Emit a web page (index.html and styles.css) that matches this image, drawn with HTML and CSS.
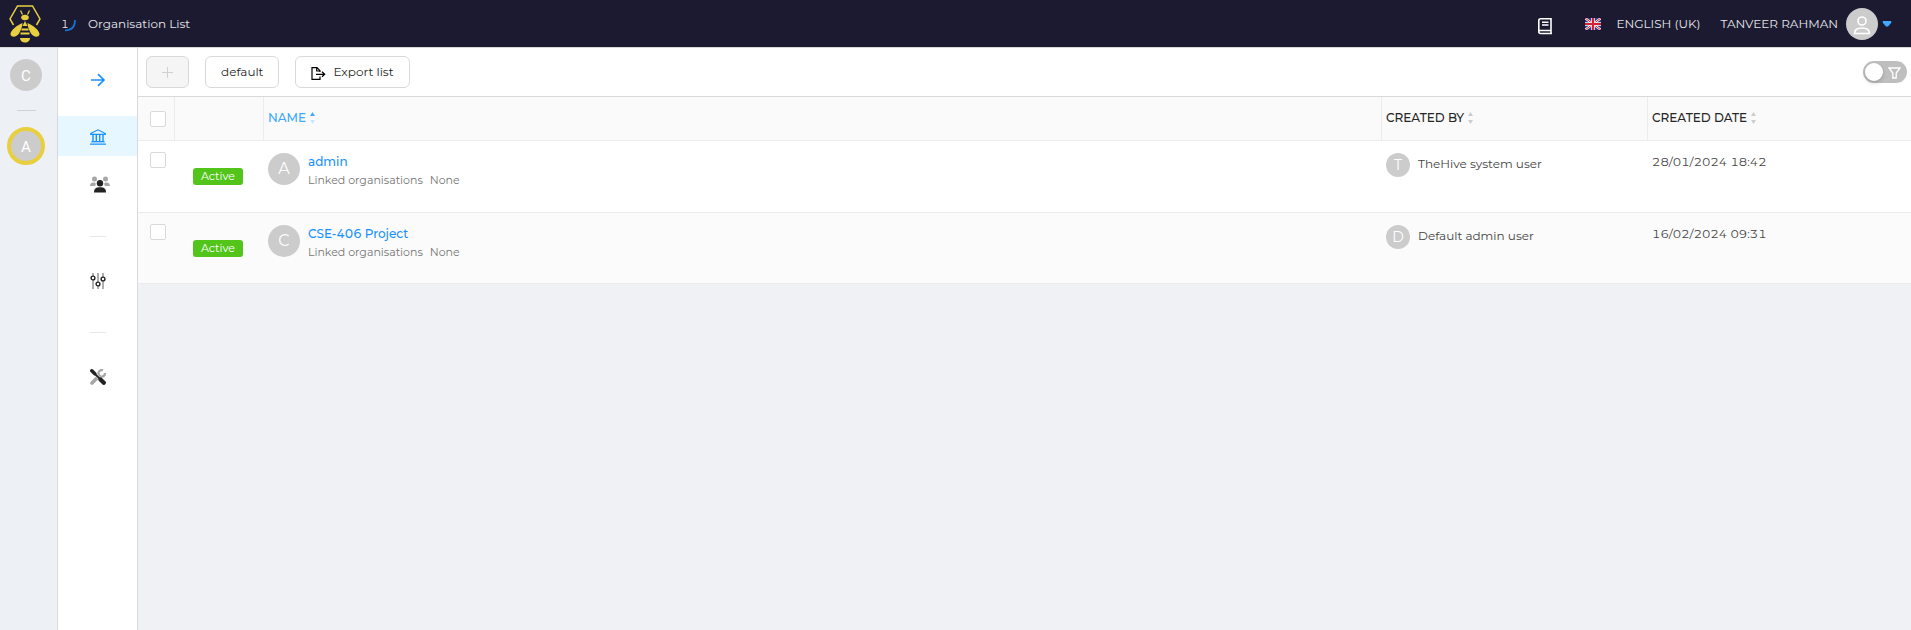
FILE: index.html
```html
<!DOCTYPE html>
<html lang="en">
<head>
<meta charset="utf-8">
<title>Organisation List</title>
<link rel="stylesheet" href="styles.css">
</head>
<body>
<div class="app">
  <header class="topbar">
    <a class="logo" href="#" aria-label="Home">
      <svg width="32" height="38" viewBox="0 0 32 38">
        <path d="M4.500 20 1 14 8.500 1h15L31 14l-3.500 6" fill="none" stroke="#e8cf40" stroke-width="1.500"/>
        <path d="m11.500 5.500 2 4m7-4-2 4" stroke="#e8cf40" stroke-width="1.300" fill="none"/>
        <ellipse cx="16" cy="12.500" rx="3.800" ry="2.700" fill="#e8cf40"/>
        <path d="m16 16 2.500 5h-5z" fill="#e8cf40"/>
        <path d="M13.500 18C8 20 1 26 1.500 29.500c1 3.500 6.500 2.500 8.500-1C11.500 26 13.500 22 13.500 18zM18.500 18c5.500 2 12.500 8 12 11.500-1 3.500-6.500 2.500-8.500-1C20.500 26 18.500 22 18.500 18z" fill="#e8cf40"/>
        <path d="M12.500 24.500h7M11.500 28.500h9" stroke="#e8cf40" stroke-width="1.800"/>
        <path d="M11 33h10c0 2.500-2 4.500-5 4.500s-5-2-5-4.500z" fill="#e8cf40"/>
      </svg>
    </a>
    <div class="loading">
      <span>1</span>
      <svg width="11" height="13" viewBox="0 0 11 13"><path d="M10 1c0 6-3 10.500-10 10.500" fill="none" stroke="#1478d8" stroke-width="1.600"/></svg>
    </div>
    <h1 class="page-title">Organisation List</h1>
    <div class="topbar-right">
      <button class="plain docs" aria-label="Documentation">
        <svg width="16" height="18" viewBox="0 0 16 18" fill="none" stroke="#fff" stroke-width="1.600">
          <path d="M14 13.500V1.800H3.500Q1.800 1.800 1.800 3.500V14.500Q1.800 16.500 3.500 16.500H15M2 13.500h12.500M14 13.500v3M5 5.200h6.500M5 8h6.500"/>
        </svg>
      </button>
      <button class="plain language">
        <svg width="16" height="12" viewBox="0 0 16 12">
          <path fill="#2b3a86" d="M0 0h16v12H0z"/>
          <path d="m0 0 16 12M16 0 0 12" stroke="#fff" stroke-width="2.200"/>
          <path d="m0 0 16 12M16 0 0 12" stroke="#d81e34" stroke-width="1"/>
          <path d="M8 0v12M0 6h16" stroke="#fff" stroke-width="3.600"/>
          <path d="M8 0v12M0 6h16" stroke="#d81e34" stroke-width="2.200"/>
        </svg>
        <span>ENGLISH (UK)</span>
      </button>
      <button class="plain account">
        <span class="account-name">TANVEER RAHMAN</span>
        <span class="avatar">
          <svg width="18" height="20" viewBox="0 0 18 20" fill="none" stroke="#fff" stroke-width="1.600"><circle cx="9" cy="6" r="4"/><path d="M1.500 18.500c0-4 3-5.500 7.500-5.500s7.500 1.500 7.500 5.500z"/></svg>
        </span>
        <svg class="caret" width="10" height="6" viewBox="0 0 10 6"><path d="M1 0h8q1 1 0 2L6 5.500H4L1 2Q0 1 1 0z" fill="#40a9ff"/></svg>
      </button>
    </div>
  </header>

  <aside class="orgs">
    <button class="plain avatar">C</button>
    <hr class="org-divider">
    <button class="plain avatar current">A</button>
  </aside>

  <nav class="sidebar">
    <a class="nav-item toggle" href="#" aria-label="Expand">
      <svg width="16" height="14" viewBox="0 0 16 14" fill="none" stroke="#1890ff" stroke-width="1.600"><path d="M1 7h13M8 1.200 14 7l-6 5.800"/></svg>
    </a>
    <a class="nav-item active" href="#" aria-label="Organisations">
      <svg width="16" height="16" viewBox="0 0 16 16" fill="none" stroke="#1890ff">
        <path d="M.7 4.500 8 .8l7.300 3.700v.8H.7z" stroke-width="1.200"/><path d="M3 6v6M6.300 6v6M9.700 6v6M13 6v6" stroke-width="1.400"/><path d="M1.500 12.700h13M0 15.200h16" stroke-width="1.300"/><path d="M1 14h14" stroke="#8dc8ff"/>
      </svg>
    </a>
    <a class="nav-item" href="#" aria-label="Users">
      <svg width="20" height="17" viewBox="0 0 20 17">
        <g fill="#a6a6a6"><circle cx="4.500" cy="3" r="2.500"/><circle cx="15.500" cy="3" r="2.500"/><path d="M0 10c0-3 2-4 5-3.500L6 8l-1 2zM20 10c0-3-2-4-5-3.500L14 8l1 2z"/></g>
        <g fill="#222"><circle cx="10" cy="7.200" r="3.200"/><path d="M4 16.500c0-4 2-5.300 6-5.300s6 1.300 6 5.300z"/></g>
      </svg>
    </a>
    <hr class="nav-divider">
    <a class="nav-item" href="#" aria-label="Settings">
      <svg width="16" height="16" viewBox="0 0 16 16"><path d="M3 0v16M8 0v16M13 0v16" stroke="#a6a6a6" stroke-width="1.800"/><g fill="#fff" stroke="#222" stroke-width="1.400"><circle cx="3" cy="5" r="1.900"/><circle cx="8" cy="11" r="1.900"/><circle cx="13" cy="6" r="1.900"/></g></svg>
    </a>
    <hr class="nav-divider">
    <a class="nav-item" href="#" aria-label="Tools">
      <svg width="16" height="16" viewBox="0 0 16 16">
        <path d="M2 14 9 7" stroke="#a6a6a6" stroke-width="3.600" stroke-linecap="round"/><path d="M13 1.300A3.300 3.300 0 1 0 15 4" fill="none" stroke="#a6a6a6" stroke-width="2.200"/>
        <path d="m1 1 12 12" stroke="#fff" stroke-width="2.600"/>
        <path d="m1 1 9 9" stroke="#222" stroke-width="1.800"/><path d="m1.800 1.800 3 3" stroke="#222" stroke-width="3.400" stroke-linecap="round"/><path d="m10.500 10.500 3.300 3.300" stroke="#222" stroke-width="4.200" stroke-linecap="round"/>
      </svg>
    </a>
  </nav>

  <main class="content">
    <div class="toolbar">
      <button class="btn add" disabled aria-label="Add organisation">
        <svg width="11" height="11" viewBox="0 0 11 11"><path d="M5.500 0v11M0 5.500h11" stroke="#d0d0d0"/></svg>
      </button>
      <button class="btn">default</button>
      <button class="btn export">
        <svg width="15" height="13" viewBox="0 0 15 13" fill="none" stroke="#000" stroke-width="1.200"><path d="M9 9.500v2.800H1V.7h5L9 3.700V5M5.700 1v3H9M5 7.300h8.500M11 4.800l2.700 2.500L11 9.800"/></svg>
        <span>Export list</span>
      </button>
      <label class="switch">
        <input type="checkbox" aria-label="Show filters">
        <svg width="13" height="12" viewBox="0 0 13 12" fill="none" stroke="#fff" stroke-width="1.300"><path d="M1 1h11L8.200 6v5H4.800V6z"/></svg>
      </label>
    </div>
    <table class="list">
      <colgroup><col class="col-check"><col class="col-status"><col><col class="col-by"><col class="col-date"></colgroup>
      <thead>
        <tr>
          <th><input class="check" type="checkbox" aria-label="Select all"></th>
          <th></th>
          <th class="sorted"><span class="sort">NAME <svg width="5" height="12" viewBox="0 0 5 12"><path d="M0 4h5L2.500 0z" fill="#40a9ff"/><path d="M0 8h5l-2.500 4z" fill="#c8e5ff"/></svg></span></th>
          <th><span class="sort">CREATED BY <svg width="5" height="12" viewBox="0 0 5 12"><path d="M0 4h5L2.500 0zM0 8h5l-2.500 4z" fill="#ccc"/></svg></span></th>
          <th><span class="sort">CREATED DATE <svg width="5" height="12" viewBox="0 0 5 12"><path d="M0 4h5L2.500 0zM0 8h5l-2.500 4z" fill="#ccc"/></svg></span></th>
        </tr>
      </thead>
      <tbody>
        <tr>
          <td><input class="check" type="checkbox" aria-label="Select admin"></td>
          <td class="status"><span class="tag">Active</span></td>
          <td><div class="org"><span class="avatar">A</span><div><a href="#">admin</a><p><span>Linked organisations</span><span>None</span></p></div></div></td>
          <td><div class="user"><span class="avatar small">T</span><span>TheHive system user</span></div></td>
          <td class="date">28/01/2024 18:42</td>
        </tr>
        <tr>
          <td><input class="check" type="checkbox" aria-label="Select CSE-406 Project"></td>
          <td class="status"><span class="tag">Active</span></td>
          <td><div class="org"><span class="avatar">C</span><div><a href="#">CSE-406 Project</a><p><span>Linked organisations</span><span>None</span></p></div></div></td>
          <td><div class="user"><span class="avatar small">D</span><span>Default admin user</span></div></td>
          <td class="date">16/02/2024 09:31</td>
        </tr>
      </tbody>
    </table>
  </main>
</div>
</body>
</html>
```
FILE: styles.css
```css
* { box-sizing: border-box; }
body { margin: 0; font: 12px/20px Montserrat, Inter, "Open Sans", sans-serif; font-feature-settings: "tnum"; color: #444; background: #f0f1f5; }
a { color: #1890ff; text-decoration: none; }
svg { display: block; flex: none; }
.app { display: grid; grid-template: 48px 1fr / 58px 80px 1fr; min-height: 100vh; }
.plain { padding: 0; border: 0; background: none; color: inherit; font: inherit; display: flex; align-items: center; cursor: pointer; }

.topbar { grid-column: 1 / -1; display: flex; align-items: center; padding: 0 19px 0 9px; background: #1b1a31; border-bottom: 1px solid #d9d9d9; color: #e6e6ea; }
.loading { display: flex; align-items: center; width: 27px; margin-left: 20px; font-size: 11px; }
.loading svg { margin-top: 4px; margin-left: -4px; }
.page-title { margin: 0; font-size: 12px; font-weight: 400; }
.topbar-right { display: flex; align-items: center; margin-left: auto; }
.docs { margin-right: 32px; padding-top: 4px; }
.language { gap: 15px; margin-right: 20px; }
.account-name { margin-right: 8px; }
.caret { margin-left: 4px; }

.avatar { display: flex; align-items: center; justify-content: center; flex: none; width: 32px; height: 32px; border-radius: 50%; background: #ccc; color: #fff; font-size: 16px; }
.avatar.small { width: 24px; height: 24px; font-size: 14px; }
.avatar svg { margin-top: 3px; }

.orgs { display: flex; flex-direction: column; align-items: center; padding: 11px 5px 0 0; background: #edf1f5; border-right: 1px solid #d9d9d9; }
.orgs .avatar { padding-top: 2px; color: #fff; font-family: Roboto, sans-serif; font-size: 15px; background: #ccc; }
.org-divider { width: 19px; margin: 19px 0 16px; border: 0; border-top: 1px solid #d0d3d6; }
.orgs .current { width: 38px; height: 38px; border: 4px solid #e8cf40; }

.sidebar { display: flex; flex-direction: column; padding-top: 12px; background: #fff; border-right: 1px solid #d9d9d9; }
.nav-item { display: flex; align-items: center; padding: 1px 0 0 32px; height: 40px; margin-bottom: 8px; }
.toggle { margin-bottom: 16px; padding-top: 0; }
.active { background: #e6f7ff; }
.nav-divider { width: 16px; margin: 24px 0 23px 32px; border: 0; border-top: 1px solid #e8e8e8; }

.content { min-width: 0; }
.toolbar { display: flex; align-items: center; gap: 16px; height: 49px; padding: 0 4px 0 8px; background: #fff; border-bottom: 1px solid #d9d9d9; }
.btn { display: flex; align-items: center; justify-content: center; gap: 7px; height: 32px; padding: 0 15px; border: 1px solid #d9d9d9; border-radius: 6px; background: #fff; color: #262626; font: inherit; }
.add { width: 43px; background: #f5f5f5; }
.export svg { margin-top: 2px; }
.switch { display: flex; align-items: center; justify-content: space-between; width: 44px; height: 22px; margin-left: auto; padding: 0 6px 0 2px; border-radius: 11px; background: #bfbfbf; }
.switch input { appearance: none; width: 18px; height: 18px; margin: 0; border-radius: 50%; background: #fff; box-shadow: 0 2px 4px rgba(0, 35, 11, .2); }
.switch svg { margin-top: 2px; }

.list { width: 100%; table-layout: fixed; border-collapse: separate; border-spacing: 0; }
.col-check { width: 37px; }
.col-status { width: 89px; }
.col-by { width: 266px; }
.col-date { width: 263px; }
.list th { height: 44px; padding: 0 4px 2px; text-align: left; font-weight: 500; color: #262626; background: #fafafa; border-bottom: 1px solid #ececec; border-right: 1px solid #ececec; }
.list th:last-child { border-right: 0; }
.list td { height: 72px; padding: 12px 4px 0; vertical-align: top; background: #fff; border-bottom: 1px solid #ececec; }
.list tr:nth-child(2) td { height: 71px; background: #fbfbfb; }
.list th:first-child { padding: 0 0 0 12px; }
.list td:first-child { padding: 11px 0 0 12px; }
.list .sorted { color: #40a9ff; }
.sort { display: flex; align-items: center; gap: 4px; }
.check { appearance: none; display: block; width: 16px; height: 16px; margin: 0; border: 1px solid #d9d9d9; border-radius: 2px; background: #fff; }
.list .status { padding: 27px 0 0 18px; }
.tag { display: block; width: 50px; height: 17px; border-radius: 3px; background: #52c41a; color: #fff; font-size: 11px; line-height: 17px; text-align: center; }
.org { display: flex; gap: 8px; }
.org a { display: block; line-height: 18px; font-weight: 500; }
.org p { display: flex; gap: 7px; margin: 0; color: #757575; font-size: 11px; line-height: 18px; }
.user { display: flex; align-items: flex-start; gap: 8px; line-height: 22px; }
.list .date { padding-top: 11px; }
```
